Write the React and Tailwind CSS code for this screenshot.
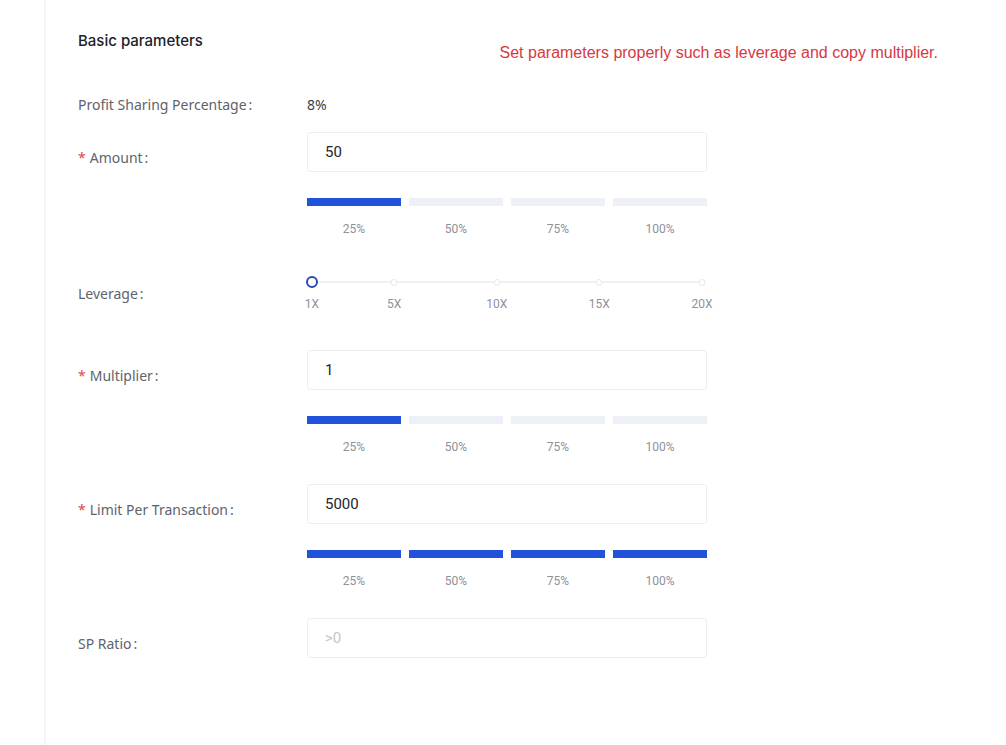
import React from "react";

const PCTS = ["25%", "50%", "75%", "100%"];
const LEVERAGE = [1, 5, 10, 15, 20];

const Label = ({ required, children }) => (
  <div className="w-[229px] shrink-0 pt-4 text-[14px] leading-5 text-[#5e636b]">
    {required && <span className="mr-1 text-[#e0464c]">*</span>}
    {children}
    <span className="ml-[2px]">:</span>
  </div>
);

const Input = ({ value, placeholder }) => (
  <div className="flex h-10 w-[400px] items-center rounded-[3px] border border-[#eceef1] bg-white pl-[17px] text-[15px]" style={{ fontFamily: "Roboto, sans-serif" }}>
    {value ? <span className="text-[#1f2329]">{value}</span> : <span className="text-[#c3c6cc]">{placeholder}</span>}
  </div>
);

const Steps = ({ filled }) => (
  <div className="mt-[26px] w-[400px]">
    <div className="grid grid-cols-4 gap-2">
      {PCTS.map((p, i) => (
        <div key={p} className={i < filled ? "h-2 bg-[#2251db]" : "h-2 bg-[#eef0f7]"} />
      ))}
    </div>
    <div className="mt-[15px] grid grid-cols-4 gap-2 text-[12px] leading-4 text-[#8d9199]" style={{ fontFamily: "Roboto, sans-serif" }}>
      {PCTS.map((p) => (
        <div key={p} className="text-center">{p}</div>
      ))}
    </div>
  </div>
);

const Slider = () => {
  const left = 6;
  const span = 390;
  return (
    <div className="relative h-[44px] w-[402px]" style={{ fontFamily: "Roboto, sans-serif" }}>
      <div className="absolute left-[6px] top-[13px] h-[2px] w-[390px] bg-[#eff1f4]" />
      {LEVERAGE.map((v, i) => {
        const x = left + ((v - 1) / 19) * span;
        return (
          <React.Fragment key={v}>
            {i === 0 ? (
              <div className="absolute top-[8px] h-3 w-3 -translate-x-1/2 rounded-full border-2 border-[#2a4bb3] bg-white" style={{ left: x }} />
            ) : (
              <div className="absolute top-[10.5px] h-[7px] w-[7px] -translate-x-1/2 rounded-full border border-[#e6e8ec] bg-white" style={{ left: x }} />
            )}
            <div className="absolute top-[28px] -translate-x-1/2 text-[12px] leading-4 text-[#8d9199]" style={{ left: x }}>
              {v}X
            </div>
          </React.Fragment>
        );
      })}
    </div>
  );
};

export default function App() {
  return (
    <div className="min-h-[745px] bg-white pl-[44px]" style={{ fontFamily: "'Noto Sans', Inter, sans-serif" }}>
      <div className="min-h-[745px] border-l-2 border-[#f4f5f7] pl-[32px] pr-[68px] pt-[29px]">
        <div className="flex items-start justify-between">
          <h2 className="text-[15px] font-medium leading-6 text-[#1d2129]" style={{ fontFamily: "Inter, sans-serif" }}>Basic parameters</h2>
          <p className="mt-[14px] text-[16px] leading-5 text-[#d6393f]" style={{ fontFamily: "'Liberation Sans', Arial, sans-serif" }}>
            Set parameters properly such as leverage and copy multiplier.
          </p>
        </div>

        <div className="mt-[32px] flex text-[14px] leading-5">
          <div className="w-[229px] shrink-0 text-[#5e636b]">
            Profit Sharing Percentage<span className="ml-[2px]">:</span>
          </div>
          <div className="text-[#3a3f47]">8%</div>
        </div>

        <div className="mt-[17px] flex">
          <Label required>Amount</Label>
          <div>
            <Input value="50" />
            <Steps filled={1} />
          </div>
        </div>

        <div className="mt-[31px] flex">
          <div className="w-[229px] shrink-0 pt-4 text-[14px] leading-5 text-[#5e636b]">
            Leverage<span className="ml-[2px]">:</span>
          </div>
          <div className="-ml-[1px]">
            <Slider />
          </div>
        </div>

        <div className="mt-[38px] flex">
          <Label required>Multiplier</Label>
          <div>
            <Input value="1" />
            <Steps filled={1} />
          </div>
        </div>

        <div className="mt-[29px] flex">
          <Label required>Limit Per Transaction</Label>
          <div>
            <Input value="5000" />
            <Steps filled={4} />
          </div>
        </div>

        <div className="mt-[29px] flex">
          <Label>SP Ratio</Label>
          <div>
            <Input placeholder=">0" />
          </div>
        </div>
      </div>
    </div>
  );
}
